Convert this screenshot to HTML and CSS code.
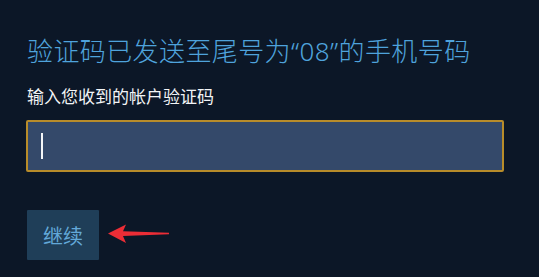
FILE: index.html
```html
<!DOCTYPE html>
<html lang="zh-CN">
<head>
<meta charset="utf-8">
<link rel="stylesheet" href="styles.css">
</head>
<body>
<main class="page">
  <h1 class="title">验证码已发送至尾号为<span class="latin">“08”</span>的手机号码</h1>
  <p class="label">输入您收到的帐户验证码</p>
  <div class="field"><span class="caret"></span></div>
  <div class="actions">
    <button class="btn">继续</button>
    <svg class="arrow" width="62" height="20" viewBox="0 0 62 20">
      <path d="M0 9.5 L18 0.5 L15 7.2 L61 8.8 L61 10.2 L15 12 L18 19 Z" fill="#ec2d36"/>
    </svg>
  </div>
</main>
</body>
</html>
```
FILE: styles.css
```css
html, body {
  margin: 0;
  padding: 0;
  background: #0c1727;
  height: 100%;
}
.page {
  padding: 35px 0 0 26px;
  font-family: "Noto Sans CJK SC", "Noto Sans", sans-serif;
}
.title {
  margin: 0;
  font-size: 26px;
  line-height: 30px;
  font-weight: 300;
  color: #4fa3dc;
  padding-left: 1px;
  white-space: nowrap;
  letter-spacing: 0.4px;
}
.latin {
  font-family: "Noto Sans", sans-serif;
  font-weight: 300;
}
.label {
  margin: 18px 0 0;
  font-size: 17px;
  line-height: 24px;
  font-weight: 400;
  color: #f2f4f6;
  padding-left: 1px;
}
.field {
  margin-top: 12px;
  height: 48px;
  border: 2px solid #b88c2a;
  border-radius: 2px;
  background: #34496a;
  display: flex;
  align-items: center;
  padding-left: 13px;
  box-sizing: content-box;
  width: 461px;
}
.caret {
  width: 2px;
  height: 26px;
  background: #f4f6f8;
}
.actions {
  margin-top: 38px;
  display: flex;
  align-items: center;
  gap: 9px;
}
.btn {
  width: 72px;
  height: 50px;
  margin-left: 1px;
  border: 0;
  border-radius: 1px;
  background: #1f3e58;
  color: #63a9d9;
  font-family: "Noto Sans CJK SC", sans-serif;
  font-size: 20px;
  font-weight: 400;
  padding: 0;
}
.arrow {
  display: block;
  margin-top: -2px;
}
```
